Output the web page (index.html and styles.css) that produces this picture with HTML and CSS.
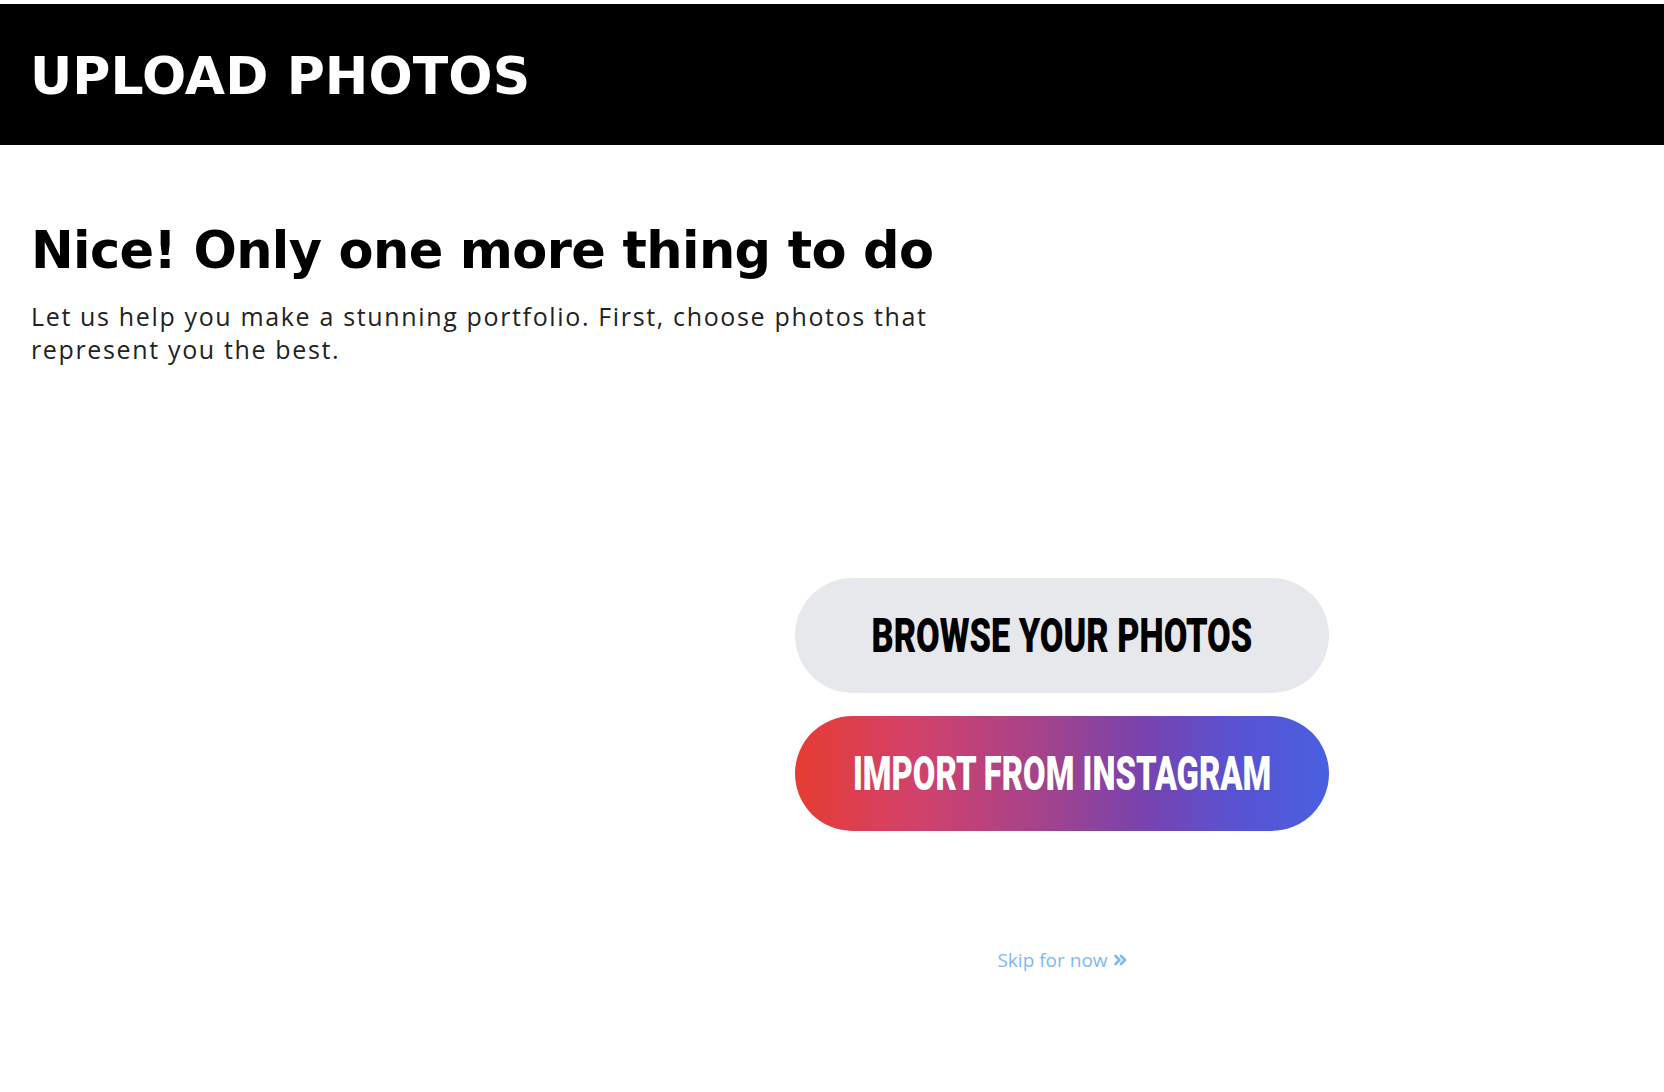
FILE: index.html
```html
<!DOCTYPE html>
<html lang="en">
<head>
<meta charset="utf-8">
<title>Upload Photos</title>
<link rel="stylesheet" href="styles.css">
</head>
<body>
<header class="topbar">
  <h1 class="topbar-title">UPLOAD PHOTOS</h1>
</header>
<main class="content">
  <section class="intro">
    <h2 class="intro-title">Nice! Only one more thing to do</h2>
    <p class="intro-text">Let us help you make a stunning portfolio. First, choose photos that represent you the best.</p>
  </section>
  <section class="actions">
    <div class="preview"></div>
    <div class="buttons">
      <button class="btn btn-browse"><span class="btn-label">BROWSE YOUR PHOTOS</span></button>
      <button class="btn btn-insta"><span class="btn-label btn-label-narrow">IMPORT FROM INSTAGRAM</span></button>
      <a class="skip" href="#">Skip for now <svg class="skip-icon" width="13" height="12" viewBox="0 0 13 12"><path d="M1.5 2 L5.5 6 L1.5 10 M7 2 L11 6 L7 10" fill="none" stroke="currentColor" stroke-width="2.6" stroke-linecap="round" stroke-linejoin="round"/></svg></a>
    </div>
  </section>
</main>
</body>
</html>
```
FILE: styles.css
```css
html, body {
  margin: 0;
  padding: 0;
  background: #ffffff;
}
body {
  padding-top: 4px;
  font-family: "DejaVu Sans", sans-serif;
}
.topbar {
  background: #000000;
  height: 141px;
  display: flex;
  align-items: center;
  padding-left: 30px;
}
.topbar-title {
  margin: 0;
  color: #ffffff;
  font-family: "DejaVu Sans", sans-serif;
  font-weight: 700;
  font-size: 52px;
  line-height: 1;
  letter-spacing: 0.1px;
  padding-top: 3px;
}
.content {
  padding-left: 31px;
}
.intro {
  padding-top: 76px;
  width: 940px;
}
.intro-title {
  margin: 0;
  font-family: "DejaVu Sans", sans-serif;
  font-weight: 700;
  font-size: 51px;
  line-height: 60px;
  letter-spacing: -0.6px;
  color: #000000;
}
.intro-text {
  margin: 19px 0 0 0;
  font-family: "Open Sans", sans-serif;
  font-weight: 400;
  font-size: 25px;
  line-height: 33px;
  color: #222222;
  letter-spacing: 1.65px;
  width: 940px;
}
.actions {
  display: grid;
  grid-template-columns: 764px 534px;
  padding-top: 212px;
}
.buttons {
  display: flex;
  flex-direction: column;
  align-items: center;
  gap: 23px;
}
.btn {
  width: 534px;
  height: 115px;
  border: none;
  border-radius: 58px;
  display: flex;
  align-items: center;
  justify-content: center;
  padding: 0;
  cursor: pointer;
}
.btn-label {
  display: inline-block;
  font-family: Roboto, sans-serif;
  font-weight: 900;
  font-size: 49px;
  line-height: 1;
  transform: scaleX(0.70);
  white-space: nowrap;
}
.btn-label-narrow {
  transform: scaleX(0.668);
}
.btn-browse {
  background: #e7e8ec;
  color: #000000;
}
.btn-insta {
  background: linear-gradient(to right, #e63c33 0%, #d3416a 22%, #a7438a 45%, #7843ae 65%, #5a52d2 82%, #4860e0 100%);
  color: #ffffff;
}
.skip {
  margin-top: 93px;
  font-family: "Open Sans", sans-serif;
  font-weight: 500;
  font-size: 19px;
  color: #7db9f6;
  text-decoration: none;
  display: flex;
  align-items: center;
  gap: 6px;
}
.skip-icon {
  display: block;
}
```
